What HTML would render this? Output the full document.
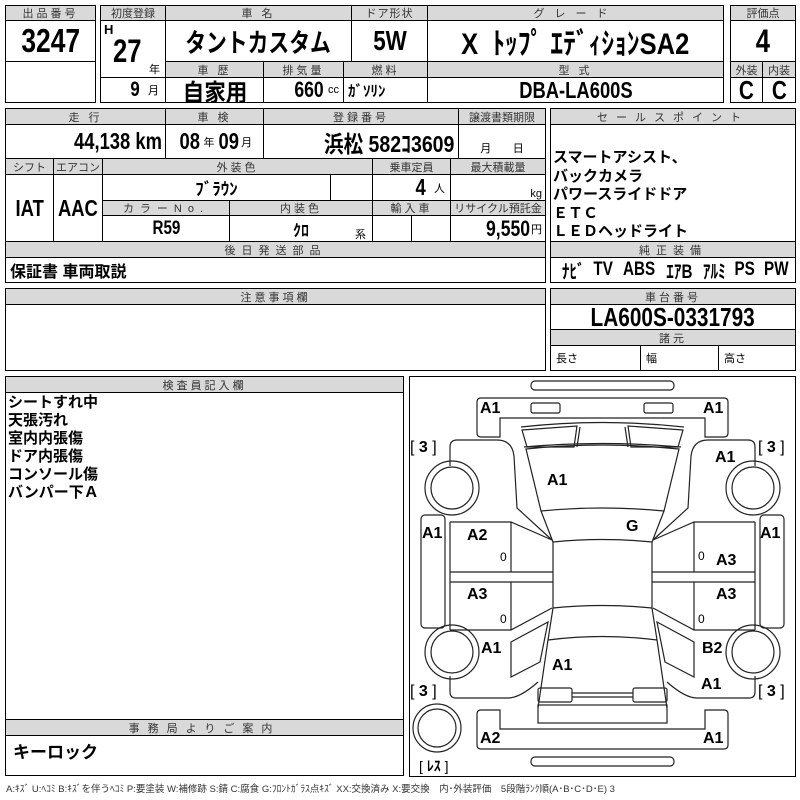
<!DOCTYPE html>
<html><head><meta charset="utf-8"><style>
*{margin:0;padding:0;box-sizing:border-box}
body{width:800px;height:800px;background:#fff;position:relative;overflow:hidden;font-family:"Liberation Sans","Noto Sans CJK JP",sans-serif;color:#000}
.c{position:absolute;border:1px solid #000;display:flex;align-items:center;justify-content:center;white-space:nowrap;overflow:hidden}
.h{background:#d9d9d9;font-size:11px;color:#333;letter-spacing:3px}
.b{font-weight:bold}
.n{display:inline-block;transform:scaleX(.8);white-space:nowrap}
.r .n{transform-origin:right center}
.s{font-size:11px;font-weight:normal}
.t{position:absolute;white-space:nowrap}
.lab{font:bold 16px "Liberation Sans",sans-serif}
</style></head><body>

<div class="c h" style="left:5px;top:5px;width:91px;height:16px">出品番号</div>
<div class="c b" style="left:5px;top:20px;width:91px;height:42px;font-size:33px"><span class="n">3247</span></div>
<div class="c" style="left:5px;top:61px;width:91px;height:42px"></div>

<div class="c h" style="left:100px;top:5px;width:66px;height:16px;letter-spacing:0">初度登録</div>
<div class="c h" style="left:165px;top:5px;width:187px;height:16px">車 名</div>
<div class="c h" style="left:351px;top:5px;width:77px;height:16px;letter-spacing:1px">ドア形状</div>
<div class="c h" style="left:427px;top:5px;width:297px;height:16px;letter-spacing:10px">グレード</div>
<div class="c" style="left:100px;top:20px;width:66px;height:58px"></div>
<div class="t b" style="left:104px;top:22px;font-size:13px">H</div>
<div class="t b" style="left:113px;top:33px;font-size:32px"><span class="n" style="transform-origin:left">27</span></div>
<div class="t" style="left:149px;top:61px;font-size:11px">年</div>
<div class="c b r" style="left:100px;top:77px;width:66px;height:26px;justify-content:flex-end;padding-right:6px;font-size:21px"><span class="n">9</span><span class="s" style="margin-left:8px">月</span></div>
<div class="c b" style="left:165px;top:20px;width:187px;height:42px;font-size:26px"><span class="n">タントカスタム</span></div>
<div class="c b" style="left:351px;top:20px;width:77px;height:42px;font-size:28px"><span class="n">5W</span></div>
<div class="c b" style="left:427px;top:20px;width:297px;height:42px;font-size:30px"><span class="n" style="transform:scaleX(.85)">X&nbsp;&nbsp;ﾄｯﾌﾟ ｴﾃﾞｨｼｮﾝSA2</span></div>
<div class="c h" style="left:165px;top:61px;width:99px;height:17px">車 歴</div>
<div class="c h" style="left:263px;top:61px;width:81px;height:17px">排気量</div>
<div class="c h" style="left:343px;top:61px;width:85px;height:17px">燃料</div>
<div class="c h" style="left:427px;top:61px;width:297px;height:17px">型 式</div>
<div class="c b" style="left:165px;top:77px;width:99px;height:26px;font-size:24px"><span class="n" style="transform:scaleX(.9)">自家用</span></div>
<div class="c b r" style="left:263px;top:77px;width:81px;height:26px;font-size:22px;justify-content:flex-end;padding-right:4px"><span class="n">660</span><span class="s" style="margin-left:4px">cc</span></div>
<div class="c b" style="left:343px;top:77px;width:85px;height:26px;font-size:15px;justify-content:flex-start;padding-left:4px">ｶﾞｿﾘﾝ</div>
<div class="c b" style="left:427px;top:77px;width:297px;height:26px;font-size:23px"><span class="n">DBA-LA600S</span></div>

<div class="c h" style="left:730px;top:5px;width:66px;height:16px;letter-spacing:0">評価点</div>
<div class="c b" style="left:730px;top:20px;width:66px;height:42px;font-size:32px"><span class="n">4</span></div>
<div class="c h" style="left:730px;top:61px;width:33px;height:17px;letter-spacing:0">外装</div>
<div class="c h" style="left:762px;top:61px;width:34px;height:17px;letter-spacing:0">内装</div>
<div class="c b" style="left:730px;top:77px;width:33px;height:26px;font-size:26px"><span class="n">C</span></div>
<div class="c b" style="left:762px;top:77px;width:34px;height:26px;font-size:26px"><span class="n">C</span></div>

<div class="c h" style="left:5px;top:108px;width:161px;height:17px">走 行</div>
<div class="c h" style="left:165px;top:108px;width:99px;height:17px">車 検</div>
<div class="c h" style="left:263px;top:108px;width:196px;height:17px">登録番号</div>
<div class="c h" style="left:458px;top:108px;width:88px;height:17px;letter-spacing:0">譲渡書類期限</div>
<div class="c b r" style="left:5px;top:124px;width:161px;height:35px;font-size:23px;justify-content:flex-end;padding-right:3px"><span class="n">44,138 km</span></div>
<div class="c b" style="left:165px;top:124px;width:99px;height:35px;font-size:23px"><span class="n">08</span><span class="s" style="margin:0 1px">年</span><span class="n">09</span><span class="s">月</span></div>
<div class="c b r" style="left:263px;top:124px;width:196px;height:35px;font-size:23px;justify-content:flex-end;padding-right:4px"><span class="n" style="transform:scaleX(.85)">浜松 582ｺ3609</span></div>
<div class="c" style="left:458px;top:124px;width:88px;height:35px;font-size:11px;align-items:flex-end;padding-bottom:2px">月&nbsp;&nbsp;&nbsp;&nbsp;&nbsp;&nbsp;&nbsp;日</div>
<div class="c h" style="left:5px;top:158px;width:49px;height:17px;letter-spacing:0">シフト</div>
<div class="c h" style="left:53px;top:158px;width:50px;height:17px;letter-spacing:0">エアコン</div>
<div class="c h" style="left:102px;top:158px;width:271px;height:17px">外装色</div>
<div class="c h" style="left:372px;top:158px;width:79px;height:17px;letter-spacing:0">乗車定員</div>
<div class="c h" style="left:450px;top:158px;width:96px;height:17px;letter-spacing:0">最大積載量</div>
<div class="c b" style="left:5px;top:174px;width:49px;height:68px;font-size:23px"><span class="n">IAT</span></div>
<div class="c b" style="left:53px;top:174px;width:50px;height:68px;font-size:23px"><span class="n">AAC</span></div>
<div class="c b" style="left:102px;top:174px;width:229px;height:27px;font-size:17px">ﾌﾞﾗｳﾝ</div>
<div class="c" style="left:330px;top:174px;width:43px;height:27px"></div>
<div class="c b r" style="left:372px;top:174px;width:79px;height:27px;font-size:23px;justify-content:flex-end;padding-right:5px"><span class="n">4</span><span class="s" style="margin-left:8px">人</span></div>
<div class="c" style="left:450px;top:174px;width:96px;height:27px;font-size:11px;justify-content:flex-end;padding-right:3px;align-items:flex-end">kg</div>
<div class="c h" style="left:102px;top:200px;width:128px;height:16px;letter-spacing:6px">カラーNo.</div>
<div class="c h" style="left:229px;top:200px;width:144px;height:16px">内装色</div>
<div class="c h" style="left:372px;top:200px;width:79px;height:16px">輸入車</div>
<div class="c h" style="left:450px;top:200px;width:96px;height:16px;letter-spacing:0">リサイクル預託金</div>
<div class="c b" style="left:102px;top:215px;width:128px;height:27px;font-size:19px"><span class="n">R59</span></div>
<div class="c b" style="left:229px;top:215px;width:144px;height:27px;font-size:16px">ｸﾛ</div>
<div class="t" style="left:355px;top:226px;font-size:11px">系</div>
<div class="c" style="left:372px;top:215px;width:40px;height:27px"></div>
<div class="c" style="left:411px;top:215px;width:40px;height:27px"></div>
<div class="c b r" style="left:450px;top:215px;width:96px;height:27px;font-size:22px;justify-content:flex-end;padding-right:3px"><span class="n">9,550</span><span class="s" style="margin-left:1px">円</span></div>
<div class="c h" style="left:5px;top:241px;width:541px;height:17px;letter-spacing:6px">後日発送部品</div>
<div class="c b" style="left:5px;top:257px;width:541px;height:26px;font-size:16px;justify-content:flex-start;padding-left:4px">保証書 車両取説</div>

<div class="c h" style="left:550px;top:108px;width:246px;height:17px;letter-spacing:8px">セールスポイント</div>
<div class="c" style="left:550px;top:124px;width:246px;height:118px"></div>
<div class="t" style="left:553px;top:149px;font-size:15px;line-height:18.5px;font-weight:bold">スマートアシスト、<br>バックカメラ<br>パワースライドドア<br>ＥＴＣ<br>ＬＥＤヘッドライト</div>
<div class="c h" style="left:550px;top:241px;width:246px;height:17px;letter-spacing:6px">純正装備</div>
<div class="c b" style="left:550px;top:257px;width:246px;height:26px;font-size:19px;justify-content:space-between;padding:0 3px 0 8px"><span class="n">ﾅﾋﾞ</span><span class="n">TV</span><span class="n">ABS</span><span class="n">ｴｱB</span><span class="n">ｱﾙﾐ</span><span class="n">PS</span><span class="n">PW</span></div>

<div class="c h" style="left:5px;top:288px;width:541px;height:17px">注意事項欄</div>
<div class="c" style="left:5px;top:304px;width:541px;height:67px"></div>
<div class="c h" style="left:550px;top:288px;width:246px;height:17px">車台番号</div>
<div class="c b" style="left:550px;top:304px;width:246px;height:26px;font-size:26px"><span class="n">LA600S-0331793</span></div>
<div class="c h" style="left:550px;top:329px;width:246px;height:17px">諸元</div>
<div class="c" style="left:550px;top:345px;width:91px;height:26px;font-size:11px;justify-content:flex-start;padding-left:5px">長さ</div>
<div class="c" style="left:640px;top:345px;width:79px;height:26px;font-size:11px;justify-content:flex-start;padding-left:5px">幅</div>
<div class="c" style="left:718px;top:345px;width:78px;height:26px;font-size:11px;justify-content:flex-start;padding-left:5px">高さ</div>

<div class="c h" style="left:5px;top:376px;width:399px;height:17px">検査員記入欄</div>
<div class="c" style="left:5px;top:392px;width:399px;height:328px"></div>
<div class="t" style="left:8px;top:394px;font-size:15px;line-height:18px;font-weight:bold">シートすれ中<br>天張汚れ<br>室内内張傷<br>ドア内張傷<br>コンソール傷<br>バンパー下Ａ</div>
<div class="c h" style="left:5px;top:719px;width:399px;height:17px;letter-spacing:8px">事務局よりご案内</div>
<div class="c" style="left:5px;top:735px;width:399px;height:41px;font-size:17px;font-weight:bold;justify-content:flex-start;padding-left:7px;align-items:flex-start;padding-top:2px">キーロック</div>
<div class="t" style="left:6px;top:781px;font-size:9.5px;color:#333">A:ｷｽﾞ U:ﾍｺﾐ B:ｷｽﾞを伴うﾍｺﾐ P:要塗装 W:補修跡 S:錆 C:腐食 G:ﾌﾛﾝﾄｶﾞﾗｽ点ｷｽﾞ XX:交換済み X:要交換　内･外装評価　5段階ﾗﾝｸ順(A･B･C･D･E) 3</div>

<div class="c" style="left:409px;top:376px;width:387px;height:401px"></div>
<svg style="position:absolute;left:0;top:0" width="800" height="800" viewBox="0 0 800 800" fill="none" stroke="#222" stroke-width="1.2">
<rect x="531" y="381" width="143" height="9" rx="4"/>
<path d="M477,402 q0,-4 4,-4 h243 q4,0 4,4 v31 q0,4 -4,4 h-19 v-19 h-205 v19 h-19 q-4,0 -4,-4 z"/>
<rect x="531" y="403" width="29" height="10" rx="2"/>
<rect x="644" y="403" width="29" height="10" rx="2"/>
<path d="M521,427 Q602,418 684,427"/>
<path d="M524,447 Q602,440 681,447"/>
<path d="M526,449 Q602,441 679,449 L664,511 Q602,505 541,511 Z"/>
<path d="M553,542 Q602,537 652,542 L652,608 Q602,603 553,608 Z"/>
<path d="M548,640 Q602,633 657,640"/>
<rect x="538" y="705" width="129" height="18"/>
<path d="M477,745 q0,4 4,4 h243 q4,0 4,-4 v-31 q0,-4 -4,-4 h-19 v19 h-205 v-19 h-19 q-4,0 -4,4 z"/>
<rect x="531" y="757" width="143" height="9" rx="4"/>
<line x1="572" y1="693" x2="633" y2="693"/><line x1="572" y1="697" x2="633" y2="697"/>
<g id="half">
<path d="M522,430 L577,426 L574,447 L527,447 Z"/>
<path d="M580,427 L577,447"/>
<path d="M450,466 V447 Q450,440 457,440 H497 Q512,440 514,456 L517,508 L552,540"/>
<circle cx="452" cy="488" r="27"/><circle cx="452" cy="488" r="21"/>
<rect x="421" y="515" width="24" height="113" rx="4"/>
<path d="M450,522 H511 L552,540 M511,522 V572 M450,572 H553 M450,582 H553 M450,522 V630 M511,582 V630 M450,630 H511 L552,608"/>
<path d="M541,511 L553,542 M553,608 L548,640 L538,708"/>
<path d="M511,642 L548,622 L540,662 L511,677 Z"/>
<path d="M450,676 V692 Q450,698 456,698 H508 Q520,698 538,682"/>
<circle cx="452" cy="652" r="27"/><circle cx="452" cy="652" r="21"/>
<rect x="538" y="688" width="34" height="14" rx="2"/>
</g>
<use href="#half" transform="translate(1205,0) scale(-1,1)"/>
<circle cx="437" cy="728" r="24"/><circle cx="437" cy="728" r="19"/>
</svg>
<div class="t lab" style="left:480px;top:400px">A1</div>
<div class="t lab" style="left:703px;top:400px">A1</div>
<div class="t lab" style="left:410px;top:439px;font-weight:normal">[ <b>3</b> ]</div>
<div class="t lab" style="left:758px;top:439px;font-weight:normal">[ <b>3</b> ]</div>
<div class="t lab" style="left:715px;top:449px">A1</div>
<div class="t lab" style="left:547px;top:472px">A1</div>
<div class="t lab" style="left:626px;top:518px">G</div>
<div class="t lab" style="left:422px;top:525px">A1</div>
<div class="t lab" style="left:760px;top:525px">A1</div>
<div class="t lab" style="left:467px;top:527px">A2</div>
<div class="t" style="left:500px;top:550px;font-size:12px">0</div>
<div class="t" style="left:698px;top:549px;font-size:12px">0</div>
<div class="t lab" style="left:716px;top:552px">A3</div>
<div class="t lab" style="left:467px;top:586px">A3</div>
<div class="t lab" style="left:716px;top:586px">A3</div>
<div class="t" style="left:500px;top:612px;font-size:12px">0</div>
<div class="t" style="left:698px;top:612px;font-size:12px">0</div>
<div class="t lab" style="left:481px;top:640px">A1</div>
<div class="t lab" style="left:702px;top:640px">B2</div>
<div class="t lab" style="left:552px;top:657px">A1</div>
<div class="t lab" style="left:701px;top:676px">A1</div>
<div class="t lab" style="left:410px;top:683px;font-weight:normal">[ <b>3</b> ]</div>
<div class="t lab" style="left:758px;top:683px;font-weight:normal">[ <b>3</b> ]</div>
<div class="t lab" style="left:480px;top:730px">A2</div>
<div class="t lab" style="left:703px;top:730px">A1</div>
<div class="t" style="left:419px;top:756px;font-size:14px">[ <b>ﾚｽ</b> ]</div>
</body></html>
